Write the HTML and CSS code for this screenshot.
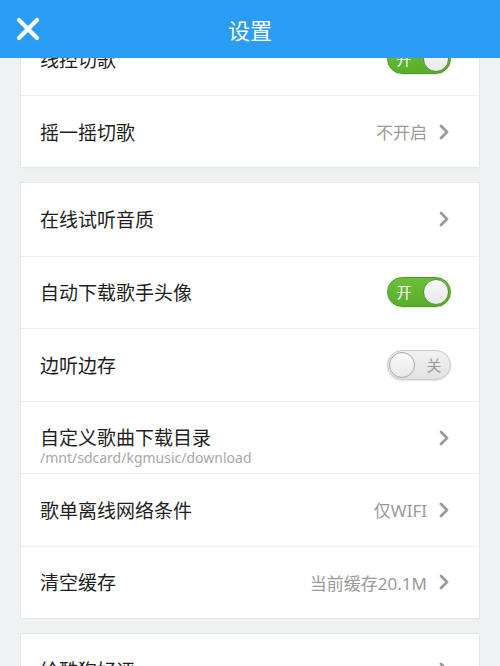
FILE: index.html
```html
<!DOCTYPE html>
<html lang="zh-CN">
<head>
<meta charset="utf-8">
<title>设置</title>
<link rel="stylesheet" href="styles.css">
</head>
<body>
<header class="topbar">
  <span class="close" aria-label="关闭">
    <svg width="24" height="24" viewBox="0 0 24 24"><path d="M3 3 L21 21 M21 3 L3 21" stroke="#fff" stroke-width="4.2" stroke-linecap="round" fill="none"/></svg>
  </span>
  <h1 class="title">设置</h1>
</header>
<main class="list">
  <section class="card card-first">
    <div class="row">
      <span class="label">线控切歌</span>
      <span class="toggle on"><span class="tg-text">开</span><span class="knob"></span></span>
    </div>
    <div class="row">
      <span class="label">摇一摇切歌</span>
      <span class="right"><span class="value">不开启</span><svg class="chev" width="10" height="16" viewBox="0 0 10 16"><path d="M2 2 L8 8 L2 14" stroke="#9a9a9a" stroke-width="2.8" fill="none" stroke-linecap="round" stroke-linejoin="round"/></svg></span>
    </div>
  </section>
  <section class="card">
    <div class="row">
      <span class="label">在线试听音质</span>
      <span class="right"><svg class="chev" width="10" height="16" viewBox="0 0 10 16"><path d="M2 2 L8 8 L2 14" stroke="#9a9a9a" stroke-width="2.8" fill="none" stroke-linecap="round" stroke-linejoin="round"/></svg></span>
    </div>
    <div class="row">
      <span class="label">自动下载歌手头像</span>
      <span class="toggle on"><span class="tg-text">开</span><span class="knob"></span></span>
    </div>
    <div class="row">
      <span class="label">边听边存</span>
      <span class="toggle off"><span class="knob"></span><span class="tg-text">关</span></span>
    </div>
    <div class="row row-sub">
      <span class="stack">
        <span class="label">自定义歌曲下载目录</span>
        <span class="sub">/mnt/sdcard/kgmusic/download</span>
      </span>
      <span class="right"><svg class="chev" width="10" height="16" viewBox="0 0 10 16"><path d="M2 2 L8 8 L2 14" stroke="#9a9a9a" stroke-width="2.8" fill="none" stroke-linecap="round" stroke-linejoin="round"/></svg></span>
    </div>
    <div class="row">
      <span class="label">歌单离线网络条件</span>
      <span class="right"><span class="value">仅WIFI</span><svg class="chev" width="10" height="16" viewBox="0 0 10 16"><path d="M2 2 L8 8 L2 14" stroke="#9a9a9a" stroke-width="2.8" fill="none" stroke-linecap="round" stroke-linejoin="round"/></svg></span>
    </div>
    <div class="row">
      <span class="label">清空缓存</span>
      <span class="right"><span class="value">当前缓存20.1M</span><svg class="chev" width="10" height="16" viewBox="0 0 10 16"><path d="M2 2 L8 8 L2 14" stroke="#9a9a9a" stroke-width="2.8" fill="none" stroke-linecap="round" stroke-linejoin="round"/></svg></span>
    </div>
  </section>
  <section class="card">
    <div class="row">
      <span class="label">给酷狗好评</span>
      <span class="right"><svg class="chev" width="10" height="16" viewBox="0 0 10 16"><path d="M2 2 L8 8 L2 14" stroke="#9a9a9a" stroke-width="2.8" fill="none" stroke-linecap="round" stroke-linejoin="round"/></svg></span>
    </div>
  </section>
</main>
</body>
</html>
```
FILE: styles.css
```css
html, body {
  margin: 0;
  padding: 0;
}
body {
  width: 500px;
  height: 666px;
  overflow: hidden;
  background: #eef2f3;
  font-family: "Noto Sans CJK SC", "Noto Sans", sans-serif;
  color: #222;
}
.topbar {
  position: fixed;
  top: 0;
  left: 0;
  right: 0;
  height: 58px;
  background: #2a9df3;
  display: flex;
  align-items: center;
  justify-content: center;
  z-index: 10;
}
.close {
  position: absolute;
  left: 16px;
  top: 17px;
  width: 24px;
  height: 24px;
  display: block;
}
.close svg { display: block; }
.title {
  margin: 0;
  font-size: 22px;
  font-weight: normal;
  color: #fff;
  line-height: 58px;
}
.list {
  display: flex;
  flex-direction: column;
  gap: 16px;
  padding: 23px 21px 0;
}
.card {
  background: #fff;
  box-shadow: 0 0 0 1px #e4e8e9, 0 1px 1px #dde1e2;
  display: flex;
  flex-direction: column;
}
.card-first .row { height: 72px; }
.row {
  box-sizing: border-box;
  height: 72.5px;
  flex: none;
  display: flex;
  align-items: center;
  justify-content: space-between;
  padding: 0 29px 0 19px;
}
.row + .row {
  border-top: 1px solid #eef0f0;
}
.label {
  font-size: 19px;
  line-height: 24px;
  color: #1e1e1e;
}
.row-sub {
  align-items: flex-start;
  padding-top: 23px;
}
.row-sub .right { margin-top: 5px; }
.stack {
  display: flex;
  flex-direction: column;
}
.sub {
  font-family: "Noto Sans", "Noto Sans CJK SC", sans-serif;
  font-size: 14px;
  line-height: 18px;
  color: #a8a8a8;
}
.right {
  display: flex;
  align-items: center;
  gap: 12px;
}
.value {
  font-family: "Noto Sans", "Noto Sans CJK SC", sans-serif;
  font-size: 17px;
  color: #9a9a9a;
}
.chev { display: block; margin-right: 1px; }
.toggle {
  box-sizing: border-box;
  width: 64px;
  height: 30px;
  border-radius: 15px;
  display: flex;
  align-items: center;
  padding: 1px;
  margin-right: -1px;
  box-shadow: 0 1px 2px rgba(0,0,0,0.12);
}
.toggle.on {
  background: linear-gradient(#6cc03a, #58ad2a);
  border: 1px solid #4f9a27;
  justify-content: space-between;
}
.toggle.off {
  background: linear-gradient(#f2f2f2, #e2e2e2);
  border: 1px solid #c9c9c9;
  justify-content: space-between;
}
.tg-text {
  font-size: 15px;
  line-height: 26px;
  width: 30px;
  text-align: center;
}
.toggle.on .tg-text { color: #fff; }
.toggle.off .tg-text { color: #999; }
.knob {
  box-sizing: border-box;
  width: 26px;
  height: 26px;
  border-radius: 50%;
  background: linear-gradient(#fafafa, #e8e8e8);
  border: 1px solid #a9a9a9;
}
.toggle.on .knob { border-color: #5e8f40; }
```
